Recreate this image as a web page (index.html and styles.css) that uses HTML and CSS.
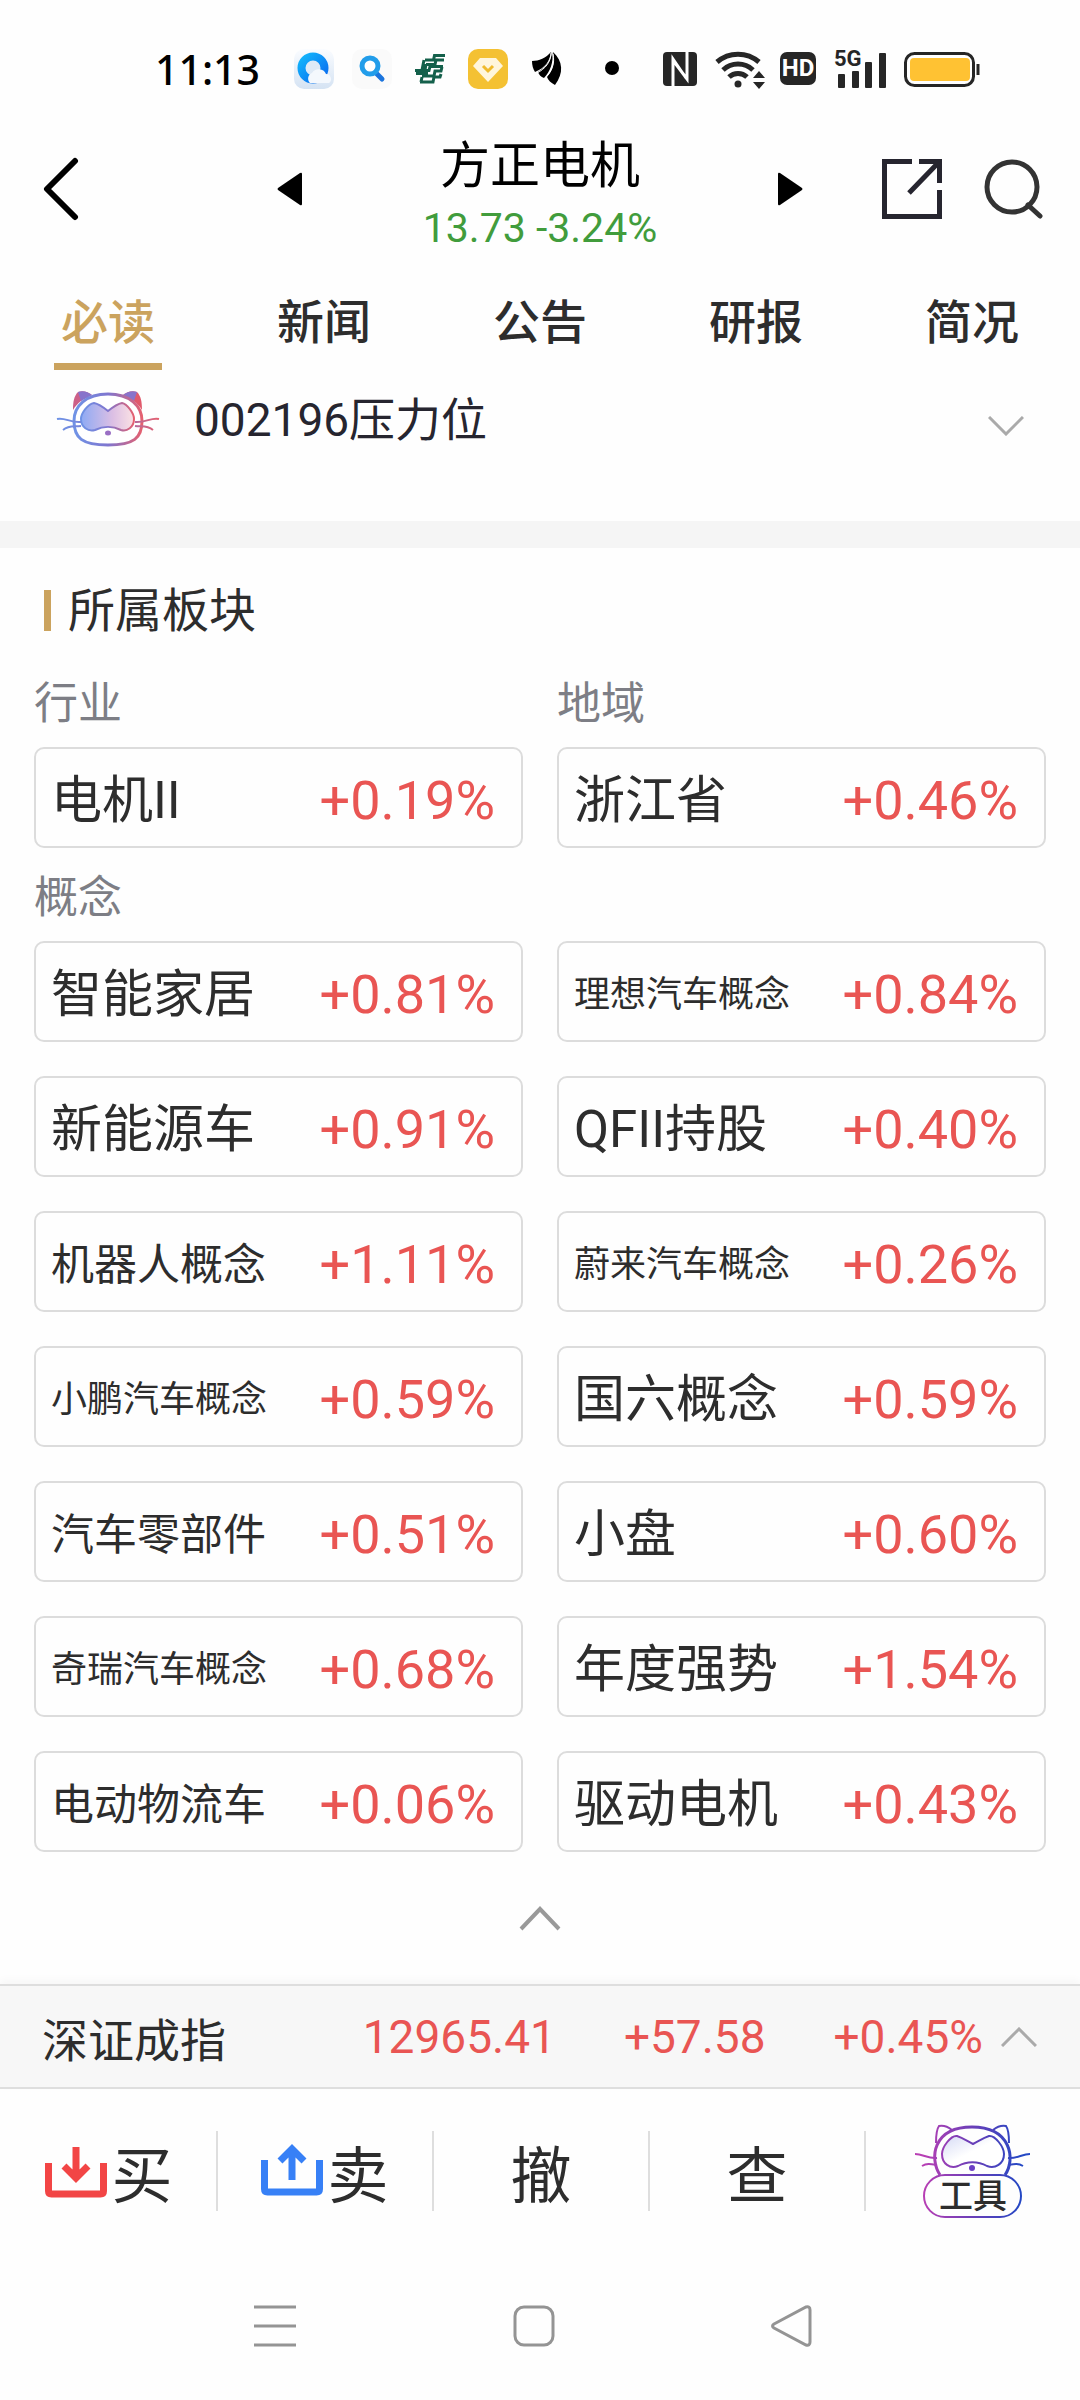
FILE: index.html
```html
<!DOCTYPE html>
<html lang="zh-CN">
  <head>
    <meta charset="utf-8">
    <meta name="viewport" content="width=device-width, initial-scale=1">
    <title>方正电机</title>
    <link rel="stylesheet" href="styles.css">
  </head>
  <body>
    <!-- Status bar -->
    <div class="status">
      <div class="status-left">
        <span class="time">11:13</span>
        <svg width="40" height="40" viewBox="0 0 40 40">
          <defs>
            <linearGradient id="qq-bg" x1="0" y1="0" x2="0" y2="1">
              <stop offset="0" stop-color="#fafcff"/>
              <stop offset="1" stop-color="#d5e3f3"/>
            </linearGradient>
            <linearGradient id="qq-ring" x1="0" y1="0" x2="1" y2="1">
              <stop offset="0" stop-color="#12b4fb"/>
              <stop offset="1" stop-color="#0a6cf0"/>
            </linearGradient>
          </defs>
          <rect width="40" height="40" rx="10" fill="url(#qq-bg)"/>
          <circle cx="19" cy="19" r="11.500" fill="#dfeaf6" stroke="url(#qq-ring)" stroke-width="8"/>
          <path d="M16 34a6 6 0 0 1 2-10 8 8 0 0 1 14 1 5 5 0 0 1 3 9z" fill="#f4f8fd"/>
        </svg>
        <svg width="40" height="40" viewBox="0 0 40 40">
          <rect width="40" height="40" rx="10" fill="#fafafa"/>
          <path d="M24 24l6 6" stroke="#1b74dd" stroke-width="5" stroke-linecap="round"/>
          <circle cx="18" cy="17" r="8" fill="#fff" stroke="#229dea" stroke-width="5"/>
        </svg>
        <svg width="40" height="40" viewBox="0 0 40 40" fill="none" stroke="#14604b" stroke-width="3">
          <path d="M35 6.500H24.500l-1 4.500H15M34 11h-8l-1 4.500h-9M14 11l-2 10M5 21.500h14l1-4h13M6 24.500h12M16 15l-1 6M32 18l-1 4h-6l-1 5H12M31 25l-1 3h-6l-1 5H10M12 28l-1 5"/>
        </svg>
        <svg width="40" height="40" viewBox="0 0 40 40">
          <rect width="40" height="40" rx="10" fill="#f4c133"/>
          <path d="M12 9h16l7 8-15 16L5 17z" fill="#fff6dc"/>
          <path d="M15 17l5 5 5-5" fill="none" stroke="#f0bb2c" stroke-width="3"/>
        </svg>
        <svg width="40" height="40" viewBox="0 0 40 40">
          <path d="M6 12C13 12 20 9 25 3c-1 9-6 16-16 20-2-3-3-7-3-11z"/>
          <path d="M26 3c2 10-2 20-8 26-3-1-5-3-6-6 8-5 13-11 14-20z"/>
          <path d="M27 3c10 9 11 21 2 33-4-2-7-5-8-8 6-7 8-15 6-25z"/>
          <path d="M25 4c0 9-6 16-14 20M27 5c2 9-1 18-8 24" fill="none" stroke="#fff"/>
        </svg>
        <svg width="56" height="40" viewBox="0 0 56 40"><circle cx="28" cy="19" r="7"/></svg>
      </div>
      <div class="status-right">
        <svg width="34" height="36" viewBox="0 0 34 36">
          <rect y="1" width="34" height="34" rx="4" fill="#262626"/>
          <path d="M10 36V8l13 19M24 0v28L12 12" fill="none" stroke="#fff" stroke-width="3"/>
        </svg>
        <svg class="wifi" width="50" height="40" viewBox="0 0 50 40" fill="none" stroke="#262626" stroke-width="5">
          <path d="M2 13a32 32 0 0 1 42 0M8 21a22 22 0 0 1 30 0M14 28a13 13 0 0 1 18 0"/>
          <circle cx="23" cy="35" r="3.500" fill="#262626" stroke="none"/>
          <path d="M44 22l6 7H38zM44 40l6-7H38z" fill="#262626" stroke="none"/>
        </svg>
        <span class="hd">HD</span>
        <div class="signal">
          <span>5G</span>
          <svg width="52" height="40" viewBox="0 0 52 40" fill="#262626">
            <rect x="4" y="25" width="7" height="14" rx="1"/>
            <rect x="18" y="22" width="7" height="17" rx="1"/>
            <rect x="31" y="13" width="7" height="26" rx="1"/>
            <rect x="45" y="4" width="7" height="35" rx="1"/>
          </svg>
        </div>
        <svg width="76" height="36" viewBox="0 0 76 36">
          <rect x="1.500" y="2.500" width="68" height="32" rx="9" fill="#fff" stroke="#262626" stroke-width="3"/>
          <rect x="6" y="7" width="60" height="23" rx="4" fill="#ffc233"/>
          <path d="M74 13v11" stroke="#262626" stroke-width="3"/>
        </svg>
      </div>
    </div>

    <header class="header">
      <button class="back" aria-label="返回">
        <svg width="36" height="64" viewBox="0 0 36 64" fill="none" stroke="#000" stroke-width="6" stroke-linecap="round" stroke-linejoin="round"><path d="M32 4L4 32l28 28"/></svg>
      </button>
      <div class="stock">
        <button aria-label="上一只">
          <svg width="25" height="34" viewBox="0 0 25 34"><path d="M1 16L23 1q2-1 2 1v30q0 2-2 1L1 18q-1-1 0-2z"/></svg>
        </button>
        <div class="stock-title">
          <h1>方正电机</h1>
          <p>13.73 -3.24%</p>
        </div>
        <button aria-label="下一只">
          <svg width="25" height="34" viewBox="0 0 25 34"><path d="M24 16L2 1Q0 0 0 2v30q0 2 2 1l22-15q1-1 0-2z"/></svg>
        </button>
      </div>
      <div class="actions">
        <button aria-label="分享">
          <svg width="60" height="60" viewBox="0 0 60 60" fill="none" stroke="#26252f" stroke-width="5"><path d="M30 2.500H2.500v55h55V31M37 2.500h20.500V24M57 3L27 34"/></svg>
        </button>
        <button aria-label="搜索">
          <svg width="60" height="60" viewBox="0 0 60 60" fill="none" stroke="#333" stroke-width="5"><circle cx="28" cy="28" r="25"/><path d="M44 46l12 11" stroke-linecap="round"/></svg>
        </button>
      </div>
    </header>

    <nav class="tabs">
      <a href="#" class="active">必读</a>
      <a href="#">新闻</a>
      <a href="#">公告</a>
      <a href="#">研报</a>
      <a href="#">简况</a>
    </nav>

    <main>
      <a href="#" class="hint">
        <svg width="104" height="57" viewBox="0 0 104 57" fill="none">
          <defs>
            <linearGradient id="cat" x1="0" y1="0" x2="1" y2="0">
              <stop offset="0" stop-color="#6f93e6"/>
              <stop offset="0.500" stop-color="#7f76cf"/>
              <stop offset="1" stop-color="#e5606f"/>
            </linearGradient>
            <linearGradient id="glass" x1="0" y1="0" x2="1" y2="0">
              <stop offset="0" stop-color="#8eaaf4"/>
              <stop offset="0.600" stop-color="#dcbfe4"/>
              <stop offset="1" stop-color="#fbe2e4"/>
            </linearGradient>
          </defs>
          <path d="M17 20c0-8 1-14 5-18 5-2 10 0 14 3-8 3-15 8-19 15z" fill="#cc6088"/>
          <path d="M22 2c5-2 10 0 14 3l-11 6z" fill="#8873cb"/>
          <path d="M86 20c0-8-1-14-5-18-5-2-10 0-14 3 8 3 15 8 19 15z" fill="#e0596b"/>
          <path d="M81 2c-5-2-10 0-14 3l11 6z" fill="#8873cb"/>
          <path d="M52 4c22 0 34 12 34 27 0 17-8 24-34 24S18 48 18 31C18 16 30 4 52 4z" fill="#fff" stroke="url(#cat)" stroke-width="3"/>
          <path d="M52 21c5-4 9-7 14-8 5 1 12 10 12 16 0 8-7 13-13 11-8-4-18-4-26 0-7 2-14-3-14-11 0-6 7-15 13-16 5 1 9 4 14 8z" fill="url(#glass)" stroke="url(#cat)" stroke-width="2"/>
          <path d="M1 29c8-2 13 4 24 3M7 40c6-5 11-3 18-4M103 29c-8-2-13 4-24 3M97 40c-6-5-11-3-18-4" stroke="url(#cat)" stroke-width="2"/>
          <ellipse cx="52" cy="43" rx="3" ry="2.500" fill="#9a6fc4"/>
        </svg>
        <span>002196压力位</span>
        <svg class="expand" width="36" height="20" viewBox="0 0 36 20" fill="none" stroke="#aaa" stroke-width="3"><path d="M1 1l17 17L35 1"/></svg>
      </a>

      <section class="blocks">
        <h2>所属板块</h2>
        <div class="grid">
          <h3>行业</h3>
          <h3>地域</h3>
          <a href="#" class="card"><span>电机II</span><b>+0.19%</b></a>
          <a href="#" class="card"><span>浙江省</span><b>+0.46%</b></a>
        </div>
        <div class="grid concepts">
          <h3>概念</h3>
          <a href="#" class="card"><span>智能家居</span><b>+0.81%</b></a>
          <a href="#" class="card small"><span>理想汽车概念</span><b>+0.84%</b></a>
          <a href="#" class="card"><span>新能源车</span><b>+0.91%</b></a>
          <a href="#" class="card"><span>QFII持股</span><b>+0.40%</b></a>
          <a href="#" class="card medium"><span>机器人概念</span><b>+1.11%</b></a>
          <a href="#" class="card small"><span>蔚来汽车概念</span><b>+0.26%</b></a>
          <a href="#" class="card small"><span>小鹏汽车概念</span><b>+0.59%</b></a>
          <a href="#" class="card"><span>国六概念</span><b>+0.59%</b></a>
          <a href="#" class="card medium"><span>汽车零部件</span><b>+0.51%</b></a>
          <a href="#" class="card"><span>小盘</span><b>+0.60%</b></a>
          <a href="#" class="card small"><span>奇瑞汽车概念</span><b>+0.68%</b></a>
          <a href="#" class="card"><span>年度强势</span><b>+1.54%</b></a>
          <a href="#" class="card medium"><span>电动物流车</span><b>+0.06%</b></a>
          <a href="#" class="card"><span>驱动电机</span><b>+0.43%</b></a>
        </div>
        <button class="collapse" aria-label="收起">
          <svg width="42" height="25" viewBox="0 0 42 25" fill="none" stroke="#999" stroke-width="4"><path d="M2 23L21 3l19 20"/></svg>
        </button>
      </section>
    </main>

    <footer>
      <a href="#" class="index">
        <span class="index-name">深证成指</span>
        <span>12965.41</span>
        <span>+57.58</span>
        <span class="index-rate">
          +0.45%
          <svg width="36" height="20" viewBox="0 0 36 20" fill="none" stroke="#aaa" stroke-width="3"><path d="M1 19L18 2l17 17"/></svg>
        </span>
      </a>
      <div class="trade">
        <button>
          <svg width="62" height="56" viewBox="0 0 62 56" fill="none" stroke="#f24545" stroke-width="7"><path d="M3.500 20v28q0 3 3 3h49q3 0 3-3V20"/><path d="M31 4v31M19 23l12 12 12-12"/></svg>
          买
        </button>
        <button>
          <svg width="62" height="56" viewBox="0 0 62 56" fill="none" stroke="#3780f6" stroke-width="7"><path d="M3.500 17v29q0 3 3 3h49q3 0 3-3V17"/><path d="M31 37V5M19 18L31 6l12 12"/></svg>
          卖
        </button>
        <button>撤</button>
        <button>查</button>
        <button class="tools">
          <svg width="116" height="94" viewBox="0 0 116 94" fill="none" stroke="url(#neon)" stroke-width="2">
            <defs>
              <linearGradient id="neon" gradientUnits="userSpaceOnUse" x1="8" y1="0" x2="106" y2="0">
                <stop offset="0" stop-color="#b93fb4"/>
                <stop offset="0.500" stop-color="#6a3fb8"/>
                <stop offset="1" stop-color="#2448c4"/>
              </linearGradient>
              <linearGradient id="shine" x1="0" y1="0" x2="1" y2="1">
                <stop offset="0" stop-color="#d5daf5"/>
                <stop offset="0.500" stop-color="#fff"/>
              </linearGradient>
            </defs>
            <path d="M21 19c0-7 0-13 3-17 5-1 8 0 13 4M94 19c0-7 0-13-3-17-5-1-8 0-13 4"/>
            <path d="M25 51C14 34 18 3 57 3s44 32 33 48" stroke-width="3"/>
            <path d="M58 20c6-3 10-6 16-8 6-1 15 11 15 18 0 10-9 15-17 12-9-5-20-5-29 0-8 3-16-2-16-12 0-7 9-19 15-18 6 2 10 5 16 8z" fill="url(#shine)"/>
            <path d="M0 30c8 0 13 5 22 4M7 42c5-3 9-2 15-1M115 30c-8 0-13 5-22 4M108 42c-5-3-9-2-15-1"/>
            <circle cx="57" cy="44" r="3" fill="#6a3fc4" stroke="none"/>
            <rect x="9" y="51" width="97" height="42" rx="21" fill="#fefefe"/>
          </svg>
          <span>工具</span>
        </button>
      </div>
      <div class="system-nav">
        <button aria-label="菜单">
          <svg width="42" height="42" viewBox="0 0 42 42" stroke="#949494" stroke-width="3"><path d="M0 2h42M0 21h42M0 40h42"/></svg>
        </button>
        <button aria-label="主页">
          <svg width="42" height="42" viewBox="0 0 42 42" fill="none" stroke="#949494" stroke-width="3"><rect x="2" y="2" width="38" height="38" rx="9"/></svg>
        </button>
        <button aria-label="后退">
          <svg width="42" height="42" viewBox="0 0 42 42" fill="none" stroke="#949494" stroke-width="3"><path d="M3 19L35 2q4-1 4 3v32q0 4-4 3L3 23q-3-2 0-4z"/></svg>
        </button>
      </div>
    </footer>
  </body>
</html>
```
FILE: styles.css
```css
* {
  box-sizing: border-box;
}
body {
  margin: 0;
  min-height: 100vh;
  display: flex;
  flex-direction: column;
  background-color: #fefefe;
  color: #2d2d2d;
  font-family: Roboto, "Noto Sans CJK SC", sans-serif;
}
h1,
h2,
h3,
p {
  margin: 0;
  font-weight: 400;
}
a {
  color: inherit;
  text-decoration: none;
}
button {
  border: none;
  padding: 0;
  background: none;
  color: inherit;
  font-family: inherit;
  cursor: pointer;
}
svg {
  display: block;
  flex-shrink: 0;
}

/* status bar */
.status {
  display: flex;
  justify-content: space-between;
  align-items: center;
  height: 120px;
  padding: 17px 100px 0 155px;
}
.status-left,
.status-right {
  display: flex;
  align-items: center;
  gap: 18px;
  height: 40px;
}
.time {
  margin-right: 16px;
  color: #000;
  font: 500 41px/40px "Noto Sans", sans-serif;
}
.wifi {
  margin-right: -3px;
}
.hd {
  width: 36px;
  border-radius: 7px;
  background-color: #262626;
  color: #fff;
  font-size: 24px;
  font-weight: 700;
  line-height: 33px;
  text-align: center;
}
.signal {
  position: relative;
}
.signal span {
  position: absolute;
  left: 0;
  top: 0;
  color: #262626;
  font-size: 22px;
  font-weight: 700;
  line-height: 20px;
}

/* header */
.header {
  display: grid;
  grid-template-columns: 1fr 2fr 1fr;
  align-items: center;
  height: 136px;
}
.back {
  justify-self: start;
  padding-left: 43px;
}
.stock {
  display: flex;
  justify-content: space-between;
  align-items: center;
  padding: 0 7px;
}
.stock-title {
  padding-top: 14px;
  text-align: center;
}
.stock-title h1 {
  color: #000;
  font-size: 50px;
  line-height: 64px;
}
.stock-title p {
  color: #419c3c;
  font-size: 41px;
  line-height: 60px;
}
.actions {
  display: flex;
  justify-content: flex-end;
  gap: 42px;
  padding-right: 36px;
}

/* tabs */
.tabs {
  display: grid;
  grid-template-columns: repeat(5, 1fr);
  height: 114px;
}
.tabs a {
  display: flex;
  flex-direction: column;
  align-items: center;
  justify-content: flex-end;
  font-size: 47px;
  font-weight: 500;
  line-height: 80px;
}
.tabs a::after {
  content: "";
  width: 50%;
  height: 7px;
}
.tabs .active {
  color: #cba35e;
}
.tabs .active::after {
  background-color: #cba35e;
}

/* hint row */
.hint {
  display: flex;
  align-items: center;
  gap: 34px;
  height: 178px;
  padding: 0 56px 54px;
  border-bottom: 27px solid #f5f5f5;
  color: #26252f;
  font-size: 46px;
}
.hint span {
  flex: 1;
  padding-bottom: 6px;
}
.expand {
  margin-top: 14px;
}

/* blocks */
.blocks {
  padding: 42px 34px 0;
}
.blocks h2 {
  display: flex;
  align-items: center;
  gap: 17px;
  padding-left: 10px;
  font-size: 47px;
  line-height: 40px;
}
.blocks h2::before {
  content: "";
  width: 7px;
  height: 41px;
  background-color: #cba35e;
}
.grid {
  display: grid;
  grid-template-columns: 1fr 1fr;
  column-gap: 34px;
}
.grid h3 {
  padding-top: 7px;
  color: #7d7e85;
  font-size: 44px;
  line-height: 86px;
}
.grid:not(.concepts) h3 {
  padding-top: 30px;
}
.concepts {
  row-gap: 34px;
}
.concepts h3 {
  grid-column: 1 / -1;
  margin-bottom: -34px;
}
.card {
  display: flex;
  justify-content: space-between;
  align-items: center;
  height: 101px;
  padding: 6px 26px 0 15px;
  border: 2px solid #dcdcdc;
  border-radius: 10px;
  font-size: 51px;
  line-height: 60px;
  white-space: nowrap;
}
.card b {
  color: #e95553;
  font-size: 54px;
  font-weight: 400;
}
.medium span {
  font-size: 43px;
}
.small span {
  font-size: 36px;
}
.collapse {
  display: block;
  margin: 0 auto;
  padding: 54px 20px 50px;
}

/* index bar */
footer {
  margin-top: auto;
}
.index {
  display: flex;
  justify-content: flex-end;
  align-items: center;
  gap: 68px;
  height: 105px;
  padding: 0 43px 0 42px;
  border-top: 2px solid #dedede;
  border-bottom: 2px solid #dedede;
  background-color: #f7f7f7;
  box-shadow: 0 -4px 8px rgba(0, 0, 0, 0.03);
  color: #e95553;
  font-size: 46px;
}
.index-name {
  margin-right: auto;
  color: #2d2d2d;
}
.index-rate {
  display: flex;
  align-items: center;
  gap: 18px;
}

/* trade bar */
.trade {
  display: grid;
  grid-template-columns: repeat(5, 1fr);
  align-items: center;
  height: 164px;
}
.trade button {
  display: flex;
  justify-content: center;
  align-items: center;
  gap: 4px;
  height: 80px;
  border-left: 2px solid #dedede;
  font-size: 61px;
}
.trade button:first-child {
  border-color: transparent;
}
.trade .tools {
  position: relative;
}
.tools span {
  position: absolute;
  left: 0;
  right: 0;
  bottom: -3px;
  font-size: 34px;
  line-height: 36px;
  font-weight: 500;
  text-align: center;
}

/* system navigation */
.system-nav {
  display: flex;
  justify-content: space-between;
  align-items: center;
  height: 147px;
  padding: 0 267px 2px 254px;
}
```
